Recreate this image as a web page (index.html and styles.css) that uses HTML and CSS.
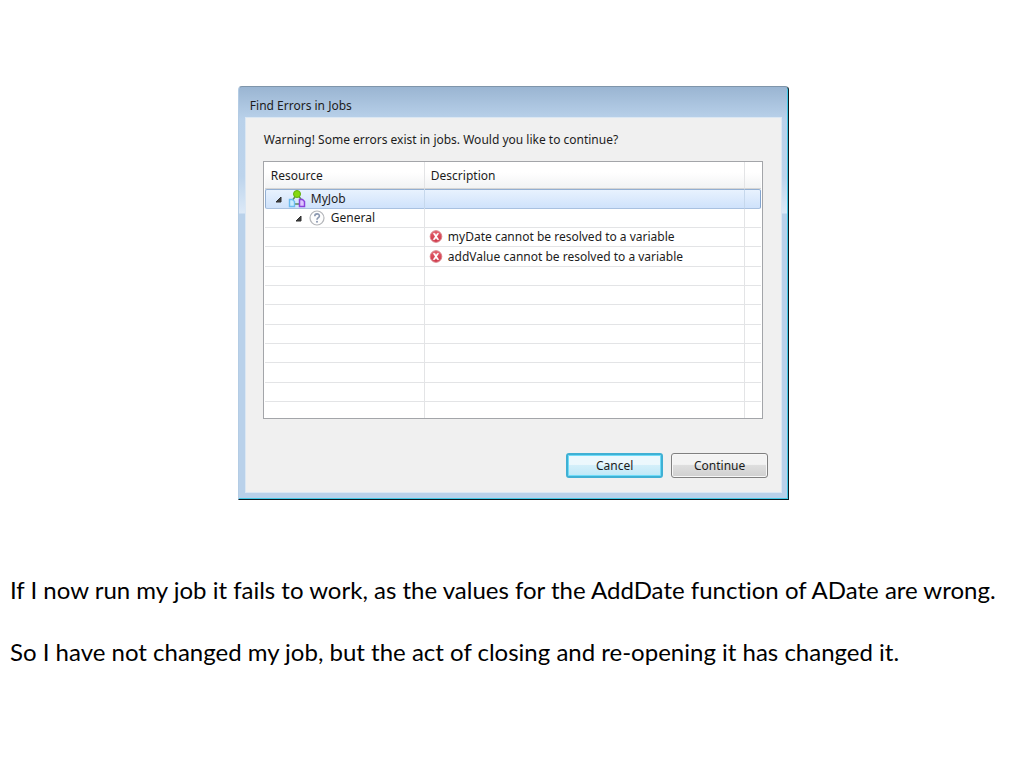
FILE: index.html
```html
<!doctype html>
<html lang="en">
  <head>
    <meta charset="UTF-8" />
    <meta name="viewport" content="width=device-width, initial-scale=1.0" />
    <title>Find Errors in Jobs</title>
    <link rel="stylesheet" href="styles.css">
  </head>
  <body>
    <!-- shared icons -->
    <svg class="icon-defs" width="0" height="0" aria-hidden="true">
      <defs>
        <linearGradient id="redFill" x1="0" y1="0" x2="0" y2="1">
          <stop offset="0" stop-color="#e4606c" />
          <stop offset="1" stop-color="#cf3446" />
        </linearGradient>
        <symbol id="icon-error" viewBox="0 0 14 14">
          <circle cx="7" cy="6.500" r="5.800" fill="url(#redFill)" stroke="#d9828a" stroke-width="1" />
          <path d="M4 3.200h2L7 4.900l1.200-1.700h1.700L7.900 6.400l2.200 3.400H8.200L7 7.900l-1.200 1.900H3.900l2.200-3.400z" fill="#fff" stroke="#fff" stroke-width=".3" />
        </symbol>
        <symbol id="icon-arrow" viewBox="0 0 8 8">
          <path d="M7 2v5H2z" fill="#404040" stroke="#303030" stroke-width="1" stroke-linejoin="round" />
        </symbol>
      </defs>
    </svg>

    <main class="slide">
      <section class="dialog" role="dialog" aria-labelledby="dialogTitle">
        <h1 class="dialog-title" id="dialogTitle">Find Errors in Jobs</h1>
        <div class="dialog-body">
          <p class="message">Warning! Some errors exist in jobs. Would you like to continue?</p>

          <div class="table-frame">
            <table class="error-table">
              <colgroup>
                <col class="col-resource" />
                <col />
                <col class="col-end" />
              </colgroup>
              <thead>
                <tr><th>Resource</th><th>Description</th><th></th></tr>
              </thead>
              <tbody>
                <tr class="selected">
                  <td>
                    <div class="tree-item">
                      <svg class="arrow"><use href="#icon-arrow" /></svg>
                      <svg class="icon-job" viewBox="0 0 18 18">
                        <path d="M7.500 6 4 11M10.500 6l4 5M7 14h4" fill="none" stroke="#5a8a5c" stroke-width="1.500" />
                        <circle cx="9" cy="4" r="3.500" fill="#86d80e" stroke="#62ae0c" />
                        <path d="M1.500 9.500h3l2 2v5h-5z" fill="#c8ecff" stroke="#6cbcf0" stroke-width="1.400" />
                        <path d="M11.500 9.500h3l2 2v5h-5z" fill="#dcc4ff" stroke="#8b42dc" stroke-width="1.500" />
                      </svg>
                      <span>MyJob</span>
                    </div>
                  </td>
                  <td></td>
                  <td></td>
                </tr>
                <tr>
                  <td>
                    <div class="tree-item child">
                      <svg class="arrow"><use href="#icon-arrow" /></svg>
                      <svg class="icon-help" viewBox="0 0 16 16">
                        <circle cx="8" cy="8" r="7" fill="#fdfdfd" stroke="#b4b6ba" stroke-width="1.200" />
                        <path d="M5.800 6.200c0-3 4.600-3 4.600-.3C10.400 7.600 8 7.600 8 9.700" fill="none" stroke="#8b98b0" stroke-width="1.600" />
                        <circle cx="8" cy="11.800" r="1" fill="#8b98b0" />
                      </svg>
                      <span>General</span>
                    </div>
                  </td>
                  <td></td>
                  <td></td>
                </tr>
                <tr>
                  <td></td>
                  <td>
                    <div class="error-item">
                      <svg class="icon-error"><use href="#icon-error" /></svg>
                      <span>myDate cannot be resolved to a variable</span>
                    </div>
                  </td>
                  <td></td>
                </tr>
                <tr>
                  <td></td>
                  <td>
                    <div class="error-item">
                      <svg class="icon-error"><use href="#icon-error" /></svg>
                      <span>addValue cannot be resolved to a variable</span>
                    </div>
                  </td>
                  <td></td>
                </tr>
                <tr><td></td><td></td><td></td></tr>
                <tr><td></td><td></td><td></td></tr>
                <tr><td></td><td></td><td></td></tr>
                <tr><td></td><td></td><td></td></tr>
                <tr><td></td><td></td><td></td></tr>
                <tr><td></td><td></td><td></td></tr>
                <tr><td></td><td></td><td></td></tr>
                <tr><td></td><td></td><td></td></tr>
              </tbody>
            </table>
          </div>

          <div class="actions">
            <button type="button" class="btn btn-default">Cancel</button>
            <button type="button" class="btn">Continue</button>
          </div>
        </div>
      </section>

      <div class="caption">
        <p>If I now run my job it fails to work, as the values for the AddDate function of ADate are wrong.</p>
        <p>So I have not changed my job, but the act of closing and re-opening it has changed it.</p>
      </div>
    </main>
  </body>
</html>
```
FILE: styles.css
```css
* {
  margin: 0;
  padding: 0;
  box-sizing: border-box;
}

body {
  font-family: "Noto Sans", sans-serif;
  font-size: 12px;
  color: #1c1c1c;
  background: #fff;
}

svg {
  flex: none;
}

.icon-defs {
  position: absolute;
}

.slide {
  padding: 86px 0 0 3px;
}

/* Dialog window */
.dialog {
  width: 54%;
  min-width: 520px;
  max-width: 640px;
  margin: 0 auto;
  padding: 0 6px 6px;
  border-top: 1px solid #7f95aa;
  border-right: 1px solid #0b1a20;
  border-bottom: 1px solid #0b1a20;
  border-left: 1px solid #b4cce4;
  border-radius: 4px 4px 0 0;
  background: linear-gradient(#9ab5d2, #b9d1ea 32px, #bdd4ec 90px, #dce9f7 126px, #b9d1ea 127px);
  box-shadow: inset -1px -1px 0 #43c8e6;
}

.dialog-title {
  height: 30px;
  padding-left: 5px;
  font-size: 12px;
  font-weight: 400;
  line-height: 37px;
}

.dialog-body {
  padding: 12px 13px 14px 17px;
  border: 1px solid #dbe7f3;
  background: #f0f0f0;
}

.message {
  padding-left: 1px;
  line-height: 20px;
}

.table-frame {
  margin: 11px 5px 0 0;
  padding: 0 1px;
  border: 1px solid #a3a5a9;
  background: #fff;
}

.error-table {
  width: 100%;
  table-layout: fixed;
  border-collapse: separate;
  border-spacing: 0;
}

.col-resource {
  width: 160px;
}

.col-end {
  width: 16px;
}

.error-table th {
  height: 27px;
  padding-left: 6px;
  border-right: 1px solid #e3e4e6;
  border-bottom: 1px solid #d5d5d5;
  background: linear-gradient(#fff 40%, #f2f3f4);
  font-weight: 400;
  text-align: left;
}

.error-table td {
  height: 19px;
  border-right: 1px solid #e3e4e6;
  border-bottom: 1px solid #e3e4e6;
  line-height: 18px;
}

.error-table tr:nth-child(3n + 1) td {
  height: 20px;
}

.error-table tr > :last-child {
  border-right: none;
}

.error-table tr:last-child td {
  height: 16px;
  border-bottom: none;
}

.error-table .selected td {
  border-top: 1px solid #93afd2;
  border-bottom: 1px solid #a9c1e0;
  border-right-color: #c6d8ec;
  background: linear-gradient(#e8f2fe, #cfe2fb);
}

.error-table .selected td:first-child {
  border-left: 1px solid #93afd2;
  border-radius: 2px 0 0 2px;
}

.error-table .selected td:last-child {
  border-right: 1px solid #84a5cf;
  border-radius: 0 2px 2px 0;
}

.tree-item,
.error-item {
  display: flex;
  align-items: center;
  height: 18px;
}

.tree-item {
  padding-left: 8px;
}

.tree-item.child {
  padding-left: 29px;
}

.arrow {
  width: 8px;
  height: 8px;
  margin-right: 6px;
}

.icon-job {
  width: 18px;
  height: 18px;
  margin-right: 5px;
}

.icon-help {
  width: 16px;
  height: 16px;
  margin: 0 6px 0 1px;
}

.error-item {
  padding-left: 4px;
}

.icon-error {
  width: 14px;
  height: 14px;
  margin-right: 5px;
}

/* Buttons */
.actions {
  display: flex;
  justify-content: flex-end;
  gap: 8px;
  margin-top: 34px;
}

.btn {
  width: 97px;
  height: 25px;
  border: 1px solid #808080;
  border-radius: 3px;
  background: linear-gradient(#f3f3f3 45%, #dedede 50%, #cfcfcf);
  box-shadow: inset 0 0 0 1px #f7f7f7;
  font: inherit;
  color: inherit;
}

.btn-default {
  border: 2px solid #3fb0d4;
  background: linear-gradient(#ecf8fd 45%, #d3effa 50%, #bfe8f7);
  box-shadow: inset 0 0 0 1px #6fdcf8;
}

/* Text under the dialog */
.caption {
  margin-top: 74px;
  padding: 0 7px;
  font-family: Lato, sans-serif;
  font-size: 24px;
  font-variant-ligatures: none;
  line-height: 31px;
  color: #000;
}

.caption p + p {
  margin-top: 31px;
}
```
